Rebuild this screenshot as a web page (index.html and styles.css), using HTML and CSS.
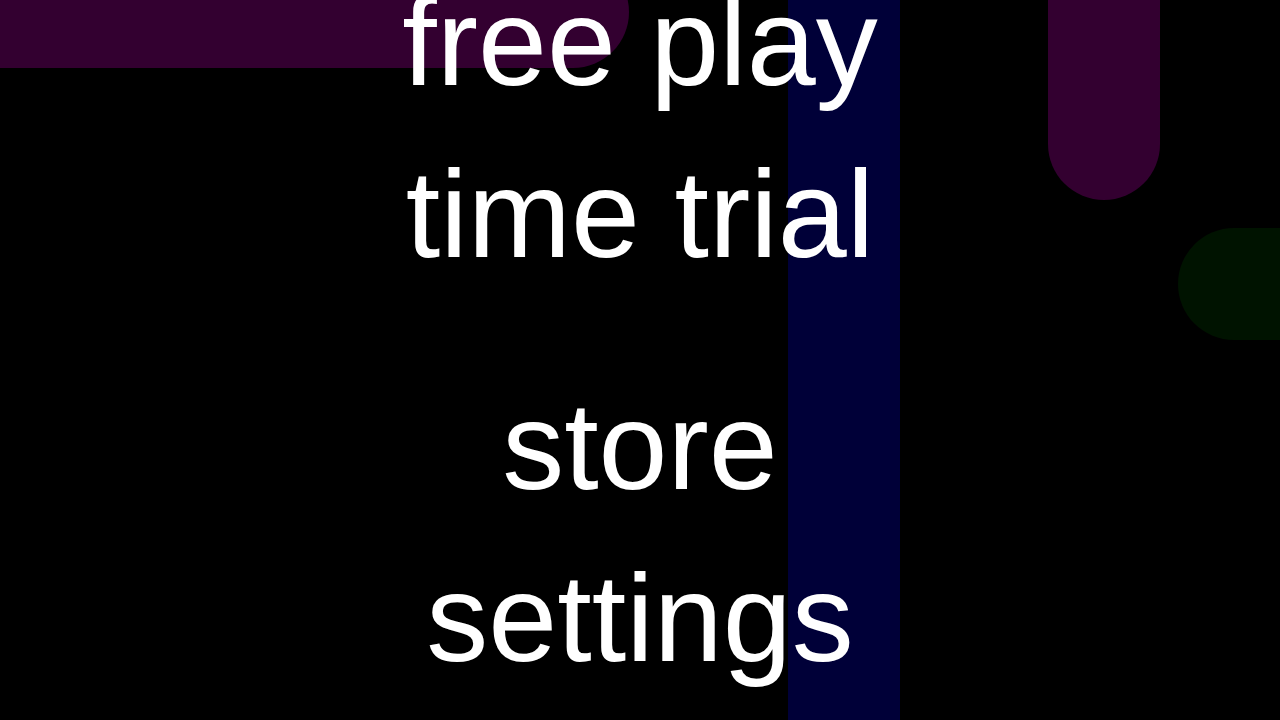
FILE: index.html
```html
<!DOCTYPE html>
<html>
<head>
<meta charset="utf-8">
<link rel="stylesheet" href="styles.css">
</head>
<body>
<div class="screen">
  <div class="decor">
    <div class="pill pill-purple-top"></div>
    <div class="pill pill-blue"></div>
    <div class="pill pill-purple-right"></div>
    <div class="pill pill-green"></div>
  </div>
  <nav class="menu">
    <div class="group">
      <div class="item">free play</div>
      <div class="item">time trial</div>
    </div>
    <div class="group">
      <div class="item">store</div>
      <div class="item">settings</div>
    </div>
  </nav>
</div>
</body>
</html>
```
FILE: styles.css
```css
html, body {
  margin: 0;
  padding: 0;
  background: #000;
}
.screen {
  position: relative;
  width: 1280px;
  height: 720px;
  overflow: hidden;
  background: #000;
}
.decor {
  position: absolute;
  inset: 0;
  z-index: 0;
}
.pill {
  position: absolute;
  border-radius: 56px;
}
.pill-purple-top {
  left: -120px;
  top: -44px;
  width: 749px;
  height: 112px;
  background: #330030;
}
.pill-blue {
  left: 788px;
  top: -10px;
  width: 112px;
  height: 740px;
  border-radius: 0;
  background: #000038;
}
.pill-purple-right {
  left: 1048px;
  top: -200px;
  width: 112px;
  height: 400px;
  background: #330030;
}
.pill-green {
  left: 1178px;
  top: 228px;
  width: 300px;
  height: 112px;
  background: #001300;
}
.menu {
  position: relative;
  z-index: 1;
  display: flex;
  flex-direction: column;
  align-items: center;
  gap: 60px;
  margin-top: -44px;
  font-family: "Liberation Sans", Arial, Helvetica, sans-serif;
  font-size: 124px;
  line-height: 172px;
  color: #fff;
}
.group {
  display: flex;
  flex-direction: column;
  align-items: center;
}
.item {
  white-space: nowrap;
}
```
